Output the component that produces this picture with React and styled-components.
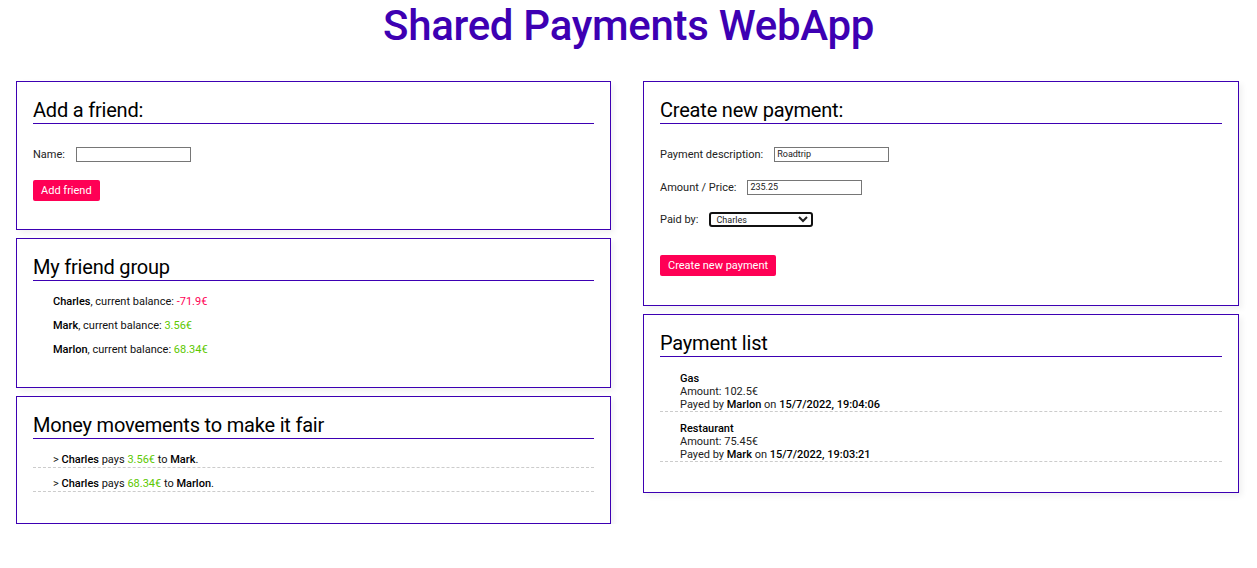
import React from "react";
import styled, { createGlobalStyle } from "styled-components";

const Global = createGlobalStyle`
  html, body { margin: 0; padding: 0; background: #fff; }
  body { font-family: Roboto, "Noto Sans", sans-serif; color: #111; }
  * { box-sizing: border-box; }
`;

const PURPLE = "#3d00b3";
const RED = "#ff0055";
const GREEN = "#5cc800";

const Title = styled.h1`
  margin: 0;
  padding-top: 2px;
  height: 68px;
  text-align: center;
  font-size: 42px;
  font-weight: 500;
  line-height: 48px;
  color: ${PURPLE};
  letter-spacing: -0.3px;
`;

const Columns = styled.div`
  display: grid;
  grid-template-columns: 595px 596px;
  column-gap: 32px;
  padding: 13px 0 0 16px;
  align-items: start;
`;

const Column = styled.div`
  display: flex;
  flex-direction: column;
  gap: 8px;
`;

const Card = styled.section`
  border: 1px solid ${PURPLE};
  box-shadow: 3px 3px 6px rgba(0, 0, 0, 0.06);
  padding: 16px 16px 0;
  height: ${(p) => p.$h}px;
`;

const CardTitle = styled.h2`
  margin: 0;
  font-size: 20px;
  font-weight: 400;
  line-height: 24px;
  padding-bottom: 1px;
  border-bottom: 1px solid ${PURPLE};
  letter-spacing: -0.2px;
  color: #000;
`;

const Form = styled.div`
  display: flex;
  flex-direction: column;
  align-items: flex-start;
  padding-top: 19px;
  font-size: 11px;
  color: #222;
`;

const Field = styled.label`
  display: flex;
  align-items: center;
  gap: 11px;
  height: 22px;
  margin-top: ${(p) => p.$mt ?? 0}px;
  margin-bottom: ${(p) => p.$mb ?? 11}px;
`;

const TextInput = styled.input`
  width: ${(p) => p.$w}px;
  height: 15px;
  border: 1px solid #767676;
  padding: 0 2px;
  font-family: inherit;
  font-size: 9px;
  color: #222;
  outline: none;
`;

const Select = styled.select`
  width: 104px;
  height: 15px;
  border: 2px solid #111;
  border-radius: 3px;
  font-family: inherit;
  font-size: 9px;
  padding: 0 1px;
  background: #fff;
  color: #222;
`;

const Button = styled.button`
  display: block;
  background: ${RED};
  color: #fff;
  border: none;
  border-radius: 2px;
  height: 21px;
  padding: 0 8px;
  font-family: inherit;
  font-size: 11px;
  margin-top: ${(p) => p.$mt ?? 0}px;
`;

const List = styled.ul`
  list-style: none;
  margin: 0;
  padding: 13px 0 0;
  font-size: 11px;
`;

const FriendItem = styled.li`
  padding-left: 20px;
  height: 24px;
  line-height: 16px;
`;

const MoveItem = styled.li`
  padding-left: 20px;
  line-height: 14px;
  border-bottom: 1px dashed #ccc;
  margin-bottom: 9px;
`;

const PayItem = styled.li`
  padding-left: 20px;
  line-height: 13px;
  border-bottom: 1px dashed #ccc;
  margin-bottom: 10px;
  color: #222;
`;

const PayList = styled(List)`
  padding-top: 15px;
`;

const MoveList = styled(List)`
  padding-top: 14px;
`;

const B = styled.b`
  font-weight: 500;
  color: #000;
`;

const Amount = styled.span`
  color: ${(p) => (p.$neg ? RED : GREEN)};
`;

const friends = [
  { name: "Charles", bal: "-71.9€", neg: true },
  { name: "Mark", bal: "3.56€" },
  { name: "Marlon", bal: "68.34€" },
];

const moves = [
  { from: "Charles", amt: "3.56€", to: "Mark" },
  { from: "Charles", amt: "68.34€", to: "Marlon" },
];

const payments = [
  { d: "Gas", a: "102.5€", by: "Marlon", at: "15/7/2022, 19:04:06" },
  { d: "Restaurant", a: "75.45€", by: "Mark", at: "15/7/2022, 19:03:21" },
];

export default function App() {
  return (
    <>
      <Global />
      <Title>Shared Payments WebApp</Title>
      <Columns>
        <Column>
          <Card $h={149}>
            <CardTitle>Add a friend:</CardTitle>
            <Form>
              <Field $mb={0}>
                Name: <TextInput $w={115} />
              </Field>
              <Button $mt={15}>Add friend</Button>
            </Form>
          </Card>
          <Card $h={150}>
            <CardTitle>My friend group</CardTitle>
            <List>
              {friends.map((f) => (
                <FriendItem key={f.name}>
                  <B>{f.name}</B>, current balance: <Amount $neg={f.neg}>{f.bal}</Amount>
                </FriendItem>
              ))}
            </List>
          </Card>
          <Card $h={128}>
            <CardTitle>Money movements to make it fair</CardTitle>
            <MoveList>
              {moves.map((m) => (
                <MoveItem key={m.to}>
                  &gt; <B>{m.from}</B> pays <Amount>{m.amt}</Amount> to <B>{m.to}</B>.
                </MoveItem>
              ))}
            </MoveList>
          </Card>
        </Column>
        <Column>
          <Card $h={225}>
            <CardTitle>Create new payment:</CardTitle>
            <Form>
              <Field>
                Payment description: <TextInput $w={115} defaultValue="Roadtrip" />
              </Field>
              <Field $mb={10}>
                Amount / Price: <TextInput $w={115} defaultValue="235.25" />
              </Field>
              <Field $mb={0}>
                Paid by:
                <Select defaultValue="Charles">
                  <option>Charles</option>
                  <option>Mark</option>
                  <option>Marlon</option>
                </Select>
              </Field>
              <Button $mt={25}>Create new payment</Button>
            </Form>
          </Card>
          <Card $h={179}>
            <CardTitle>Payment list</CardTitle>
            <PayList>
              {payments.map((p) => (
                <PayItem key={p.d}>
                  <B>{p.d}</B>
                  <div>Amount: {p.a}</div>
                  <div>
                    Payed by <B>{p.by}</B> on <B>{p.at}</B>
                  </div>
                </PayItem>
              ))}
            </PayList>
          </Card>
        </Column>
      </Columns>
    </>
  );
}
